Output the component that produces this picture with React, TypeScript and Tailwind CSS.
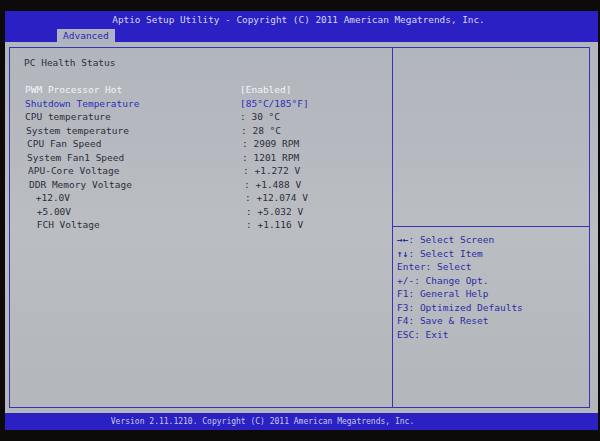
import React from 'react';

const rows: { label: string; value: string; tone?: 'white' | 'blue' }[] = [
  { label: 'PWM Processor Hot', value: '[Enabled]', tone: 'white' },
  { label: 'Shutdown Temperature', value: '[85°C/185°F]', tone: 'blue' },
  { label: 'CPU temperature', value: ': 30 °C' },
  { label: 'System temperature', value: ': 28 °C' },
  { label: 'CPU Fan Speed', value: ': 2909 RPM' },
  { label: 'System Fan1 Speed', value: ': 1201 RPM' },
  { label: 'APU-Core Voltage', value: ': +1.272 V' },
  { label: 'DDR Memory Voltage', value: ': +1.488 V' },
  { label: ' +12.0V', value: ': +12.074 V' },
  { label: ' +5.00V', value: ': +5.032 V' },
  { label: ' FCH Voltage', value: ': +1.116 V' },
];

const help = [
  ['→←', ': Select Screen'],
  ['↑↓', ': Select Item'],
  ['', 'Enter: Select'],
  ['', '+/-: Change Opt.'],
  ['', 'F1: General Help'],
  ['', 'F3: Optimized Defaults'],
  ['', 'F4: Save & Reset'],
  ['', 'ESC: Exit'],
];

export default function App() {
  return (
    <div
      className="w-[600px] h-[441px] bg-[#0d0b09] overflow-hidden pt-[11px] pl-[5px]"
      style={{ fontFamily: '"DejaVu Sans Mono", "Liberation Mono", monospace' }}
    >
      <div className="w-[593px] h-[419px] flex flex-col">
        {/* Header */}
        <div className="h-[31px] bg-[#2a20c4] flex flex-col">
          <div className="h-[18px] flex items-center justify-center text-[9.4px] text-[#d6d6f4] pr-[6px]">
            Aptio Setup Utility - Copyright (C) 2011 American Megatrends, Inc.
          </div>
          <div className="flex-1 flex items-end pl-[52px]">
            <div className="h-[13px] px-[6px] bg-[#aeb2c2] text-[#2a2aa8] text-[9.5px] leading-[13px]">
              Advanced
            </div>
          </div>
        </div>

        {/* Body */}
        <div className="flex-1 bg-[linear-gradient(180deg,#b1b5bc_0%,#babec3_50%,#b3b7bb_100%)] pt-[5px] pb-[5px] pl-[4px] pr-[8px] flex">
          <div className="flex-1 border border-[#3434b4] flex">
            {/* Left column */}
            <div className="w-[383px] border-r border-[#3434b4] pt-[8px] pl-[14px] text-[9.5px] leading-[13.5px] text-[#2e2e3a]">
              <div>PC Health Status</div>
              <div className="h-[13.5px]" />
              {rows.map((r, i) => (
                <div
                  key={i}
                  className={`flex whitespace-pre ${
                    r.tone === 'white' ? 'text-[#f4f4f8]' : r.tone === 'blue' ? 'text-[#2e2ebc]' : ''
                  }`}
                  style={{ paddingLeft: i >= 2 ? Math.round((i - 2) * 0.8) + 1 : 1 }}
                >
                  <span className="w-[215px]">{r.label}</span>
                  <span>{r.value}</span>
                </div>
              ))}
            </div>

            {/* Right column */}
            <div className="flex-1 flex flex-col">
              <div className="h-[179px] border-b border-[#3434b4]" />
              <div className="pt-[6px] pl-[4px] text-[9.5px] leading-[13.5px] text-[#2c2ca6]">
                {help.map(([a, t], i) => (
                  <div key={i} className="whitespace-pre">
                    {a && <span className="font-bold">{a}</span>}
                    {t}
                  </div>
                ))}
              </div>
            </div>
          </div>
        </div>

        {/* Footer */}
        <div className="h-[17px] bg-[#2a20c4] flex items-center justify-center text-[8px] text-[#c8c8ea] pr-[78px]">
          Version 2.11.1210. Copyright (C) 2011 American Megatrends, Inc.
        </div>
      </div>
    </div>
  );
}
